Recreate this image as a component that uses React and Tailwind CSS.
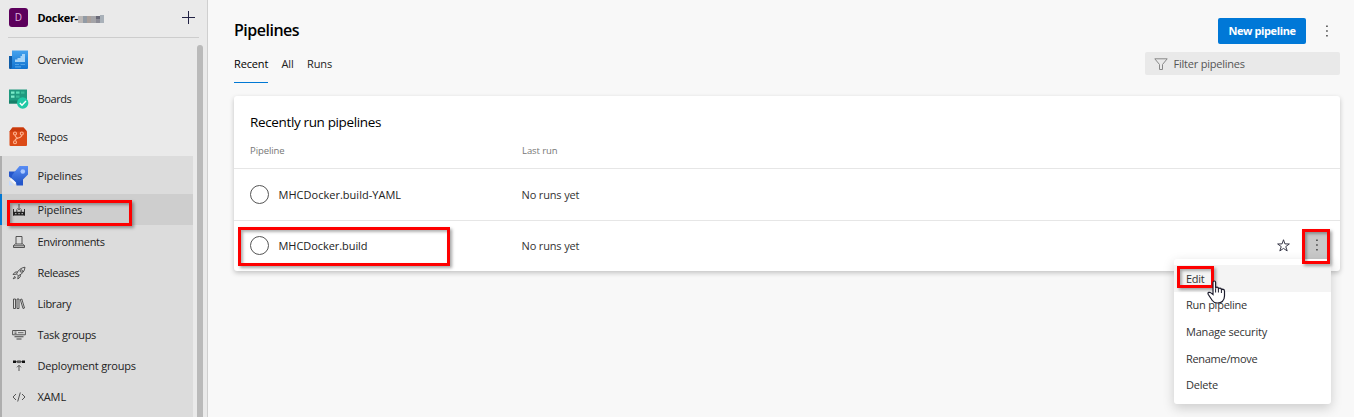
import React from "react";

const OverviewIcon = () => (
  <svg width="20" height="20" viewBox="0 0 20 20">
    <defs>
      <linearGradient id="ov" x1="0" y1="0" x2="0" y2="1">
        <stop offset="0" stopColor="#45a3ee" />
        <stop offset="1" stopColor="#0f72cf" />
      </linearGradient>
    </defs>
    <path d="M0 6h3v13H1a1 1 0 0 1-1-1z" fill="#0f5da8" />
    <path d="M3 .5h16v17.500a1 1 0 0 1-1 1H1.500q1.500-.4 1.500-2z" fill="url(#ov)" />
    <path d="M6 12V9.500h2.500V8h3V6H13V4h3v8z" fill="#a5d4f8" />
    <path d="M6 14.500h4M11.500 14.500h4.500M6 16.800h6" stroke="#4fa3e8" strokeWidth="1.200" />
  </svg>
);

const BoardsIcon = () => (
  <svg width="20" height="20" viewBox="0 0 20 20">
    <path d="M0 .5h18v14H0z" fill="#20997f" />
    <path d="M0 11.500h18v3H0z" fill="#177f69" />
    <path d="M2 2.500h3.500v2.200H2zM2 6.500h3.500v2.200H2z" fill="#7bebc9" />
    <path d="M7 2.500h3.500v2.200H7z" fill="#5ee0b9" />
    <path d="M7 6.500h3.500v2.200H7zM12 2.500h3.500v2.200H12z" fill="#39bb98" />
    <circle cx="13.700" cy="14" r="5.700" fill="#20c9a6" />
    <path d="M10.800 14l2.200 2.300 4-4.300" stroke="#fff" strokeWidth="1.400" fill="none" />
  </svg>
);

const ReposIcon = () => (
  <svg width="20" height="20" viewBox="0 0 20 20">
    <path d="M3.500.5h11L18 4.500v13.500a1 1 0 0 1-1 1H1.500a1 1 0 0 1-1-1V4.500z" fill="#dc4a16" />
    <path d="M3.500.5h11L18 4.500H.5z" fill="#c93a0c" />
    <g fill="none" stroke="#ffb492" strokeWidth="1.100">
      <circle cx="6" cy="6.500" r="1.500" />
      <circle cx="12.800" cy="6.500" r="1.500" />
      <circle cx="6" cy="15.200" r="1.500" />
      <path d="M12.800 8c0 4-6.800 2-6.800 5.700M6 8q0 2 2.500 3" />
    </g>
  </svg>
);

const RocketBlueIcon = () => (
  <svg width="20" height="20" viewBox="0 0 20 20">
    <defs>
      <linearGradient id="rk" x1="0" y1="0" x2="0" y2="1">
        <stop offset="0" stopColor="#5a8ef5" />
        <stop offset="1" stopColor="#1f53c4" />
      </linearGradient>
    </defs>
    <path d="M0 5.500h7l-3 8-4-3zM7 16.500l7-4v7H7.500z" fill="#2456cb" />
    <path d="M10.500 0H19v8.500L9 18.500 2.500 12q0-3 3-6z" fill="url(#rk)" />
    <circle cx="13.800" cy="5.500" r="2.300" fill="#a9c8ff" />
    <path d="M1.500 13l5 4.500" stroke="#f2f6ff" strokeWidth="1.800" />
    <path d="M0 14.500l4.500 5H0z" fill="#c6dafc" />
  </svg>
);

const S = ({ children }) => (
  <svg width="14" height="14" viewBox="0 0 14 14" fill="none" stroke="#444" strokeWidth=".9">
    {children}
  </svg>
);

const BuildIcon = () => (
  <S>
    <path d="M1.500 12.500V6M12.500 12.500V6M4.800 6.500V9M9.200 6.500V9" stroke="#222" />
    <path d="M1 8.800h12v3.700H1z" fill="#222" stroke="none" />
    <path d="M7 1v5.500M5.500 5.300L7 6.800l1.500-1.500" />
    <path d="M3 10.700h1.500M6.300 10.700h1.500M9.500 10.700H11" stroke="#ddd" />
  </S>
);
const EnvIcon = () => (
  <S>
    <path d="M4 9V1.500h6V9M3.500 9h7l2 1.500v2h-11v-2zM1.500 10.800h11" />
  </S>
);
const ReleaseIcon = () => (
  <S>
    <path d="M4.500 8q2.500-6 8.500-6.800Q12.500 7 6.300 9.800zM5.500 5.800l-2.500.4L1 8.500l3.300-.3M8.300 8.700l-.1 2.300L5.800 13l.4-3.200M3 10l-1.800 2.800L4 11.500" />
    <circle cx="9.300" cy="5" r="1.200" />
  </S>
);
const LibraryIcon = () => (
  <S>
    <path d="M1.500 2v9.500h2V2zM5 2v9.500h2V2zM8.300 2.500l1.500-.5 2.700 9-1.500.5z" />
  </S>
);
const TaskIcon = () => (
  <S>
    <path d="M.6 2.500h12.800v4.300H.6z" />
    <path d="M2.500 4h2M2.500 5.400h2M6 4.700h5.500" strokeWidth=".8" />
    <path d="M2.500 8.800h9M4.500 11h5" strokeWidth="1.100" />
  </S>
);
const DeployIcon = () => (
  <S>
    <path d="M1 1.500h3v2.500H1zM10 1.500h3v2.500h-3z" fill="#111" stroke="none" />
    <path d="M5.300 1.900h3.400v1.700H5.300zM4 2.700h6M7 12V6.500M5 8.300l2-2 2 2" />
  </S>
);
const XamlIcon = () => (
  <S>
    <path d="M4 4L1 7l3 3M10 4l3 3-3 3M8.300 2.500l-2.600 9" />
  </S>
);

const Dots = () => (
  <svg width="4" height="12" viewBox="0 0 4 12" fill="#333">
    <path d="M1.250 .5h1.400v1.400h-1.400zM1.250 5.300h1.400v1.400h-1.400zM1.250 10.100h1.400v1.400h-1.400z" />
  </svg>
);

const hubs = [
  { label: "Overview", icon: <OverviewIcon />, t: "tracking-[-0.25px]" },
  { label: "Boards", icon: <BoardsIcon />, t: "tracking-[-0.4px]" },
  { label: "Repos", icon: <ReposIcon />, t: "tracking-[-0.25px]" },
];

const subs = [
  { label: "Environments", icon: <EnvIcon />, t: "tracking-[-0.35px]" },
  { label: "Releases", icon: <ReleaseIcon />, t: "tracking-[-0.35px]" },
  { label: "Library", icon: <LibraryIcon />, t: "tracking-[-0.3px]" },
  { label: "Task groups", icon: <TaskIcon />, t: "tracking-[-0.3px]" },
  { label: "Deployment groups", icon: <DeployIcon />, t: "tracking-[-0.18px]" },
  { label: "XAML", icon: <XamlIcon />, t: "tracking-[-0.1px]" },
];

const Mark = ({ className }) => (
  <div className={"pointer-events-none absolute z-20 border-3 border-[#fe0000] shadow-[2px_2px_3px_rgba(0,0,0,0.35),inset_2px_2px_3px_rgba(0,0,0,0.3)] " + className} />
);

const Hub = ({ item }) => (
  <div className="flex h-[38.500px] items-center pl-[9px]">
    {item.icon}
    <span className={"ml-[8.500px] " + item.t}>{item.label}</span>
  </div>
);

const Row = ({ name, nameClass, children, className }) => (
  <div className={"flex items-center border-t border-[#e6e6e6] pl-4 " + className}>
    <div className="h-[19px] w-[19px] rounded-full border-[1.500px] border-[#555]" />
    <div className={"ml-[9.500px] w-[243px] pt-px font-medium " + nameClass}>{name}</div>
    <div className="grow pt-px tracking-[-0.15px] text-[#333]">No runs yet</div>
    {children}
  </div>
);

export default function App() {
  return (
    <div className="relative flex h-[417px] w-[1354px] overflow-hidden bg-[#f8f8f8] font-['Open_Sans','Noto_Sans',sans-serif] text-[11px] whitespace-nowrap text-[#222]">
      <aside className="flex w-[208px] shrink-0 flex-col border-r border-[#cfcfcf] bg-[#eaeaea]">
        <div className="ml-2 flex h-[38px] w-[191px] shrink-0 items-center border-b border-[#cdcdcd] pl-px">
          <div className="mb-0.5 flex h-[19px] w-[19px] items-center justify-center rounded-[3px] bg-[#5c005c] text-[10px] text-[#e0b8e0]">D</div>
          <span className="ml-[9.500px] font-bold tracking-[-0.3px] text-black">Docker-</span>
          <svg className="mt-0.5" width="27" height="9" viewBox="0 0 27 9" shapeRendering="crispEdges">
            <path d="M0 1h5v7H0z" fill="#bcb8b6" />
            <path d="M5 1h4v7H5z" fill="#929ba5" />
            <path d="M9 1h4v7H9z" fill="#aaa09b" />
            <path d="M13 1h5v7h-5z" fill="#a4a4a8" />
            <path d="M18 1h4v3h-4z" fill="#696977" />
            <path d="M18 4h4v4h-4z" fill="#8d8d97" />
            <path d="M22 0h4v8h-4z" fill="#a9b1b9" />
          </svg>
          <svg className="mb-0.5 ml-auto mr-1" width="13" height="13" viewBox="0 0 13 13" stroke="#222244">
            <path d="M6.500 0v13M0 6.500h13" />
          </svg>
        </div>
        <div className="flex grow">
          <nav className="w-[193px] pt-[3px]">
            {hubs.map((h) => (
              <Hub key={h.label} item={h} />
            ))}
            <div className="-mt-[0.500px] h-[262px] border-l-2 border-[#aeaeae] bg-[#dcdcdc]">
              <div className="-ml-0.5 h-[38px] pt-[0.600px]">
                <Hub item={{ label: "Pipelines", icon: <RocketBlueIcon />, t: "tracking-[-0.15px]" }} />
              </div>
              <div className="-ml-0.5 flex h-[31px] items-center border-l-2 border-[#0078d4] bg-[#cecece] pt-px pl-[10px]">
                <BuildIcon />
                <span className="ml-[11.500px] tracking-[-0.15px]">Pipelines</span>
              </div>
              <div className="pt-[1.500px]">
                {subs.map((s) => (
                  <div key={s.label} className="flex h-[31px] items-center pl-[10px]">
                    {s.icon}
                    <span className={"ml-[11.500px] pt-px " + s.t}>{s.label}</span>
                  </div>
                ))}
              </div>
            </div>
          </nav>
          <div className="mt-[7px] ml-1 w-[6px] rounded-t-[3px] bg-[#bababa]" />
        </div>
      </aside>

      <main className="flex grow flex-col pr-[14px] pl-[26px]">
        <header className="flex h-[46px] items-end">
          <h1 className="mb-[5px] grow text-[16px] font-semibold leading-[22px] tracking-[-0.5px] text-black">Pipelines</h1>
          <button className="mb-[2px] h-[26px] w-[88px] rounded-[2px] bg-[#0078d7] text-[11px] font-bold tracking-[-0.4px] text-white">New pipeline</button>
          <div className="mb-[9px] ml-[19px] mr-[11px]"><Dots /></div>
        </header>
        <div className="flex h-[37px] items-end justify-between">
          <div className="flex h-[37px] gap-[13.500px] tracking-[-0.15px]">
            <div className="flex w-[34px] items-center border-b border-[#0078d4] font-medium text-black">Recent</div>
            <div className="flex items-center">All</div>
            <div className="flex items-center">Runs</div>
          </div>
          <div className="mb-[8px] flex h-[23px] w-[195px] items-center rounded-[2px] bg-[#e9e9e9] pl-[9px] text-[#555]">
            <svg width="14" height="12" viewBox="0 0 14 12" fill="none" stroke="#888">
              <path d="M.8.800h12.400L8.500 6.500v5h-3v-5z" />
            </svg>
            <span className="ml-[5.500px] pt-px tracking-[-0.22px]">Filter pipelines</span>
          </div>
        </div>
        <section className="mt-[13px] h-[175px] rounded-[3px] bg-white shadow-[0_2px_5px_rgba(0,0,0,0.22)]">
          <div className="h-[72px] pl-4">
            <h2 className="pt-[16px] text-[13.500px] leading-[20px] tracking-[-0.36px] text-black">Recently run pipelines</h2>
            <div className="mt-[12px] flex text-[9.500px] leading-[14px] tracking-[-0.08px] text-[#777]">
              <span className="w-[272px]">Pipeline</span>
              <span>Last run</span>
            </div>
          </div>
          <Row name="MHCDocker.build-YAML" nameClass="tracking-[0.02px]" className="h-[52px]" />
          <Row name="MHCDocker.build" nameClass="tracking-[-0.06px]" className="h-[50px]">
            <svg className="mr-[14px] mb-px" width="13" height="13" viewBox="0 0 12 12" fill="none" stroke="#334" strokeWidth=".9">
              <path d="M6 .7l1.300 3.800 4.100.1-3.300 2.400 1.300 4L6 8.700 2.600 11l1.300-4L.6 4.600l4.100-.1z" />
            </svg>
            <div className="mr-[10px] flex h-[31px] w-[26px] items-center justify-center bg-[#c8c8c8] pb-[2px]"><Dots /></div>
          </Row>
        </section>
      </main>

      <div className="absolute top-[259px] left-[1174px] z-10 h-[145px] w-[157px] rounded-[3px] bg-white pt-[6px] leading-[26.600px] tracking-[-0.14px] text-[#333] shadow-[0_4px_12px_rgba(0,0,0,0.18)]">
        <div className="h-[27px] bg-[#f4f4f4] pt-px pl-3 tracking-[-0.3px]">Edit</div>
        <div className="pl-3 tracking-[-0.25px]">Run pipeline</div>
        <div className="pl-3 tracking-[-0.2px]">Manage security</div>
        <div className="h-[26.600px] pt-[0.600px] pl-3 tracking-[-0.3px]">Rename/move</div>
        <div className="pl-3 tracking-[-0.2px]">Delete</div>
      </div>

      <Mark className="top-[200px] left-[7px] h-[26px] w-[125px]" />
      <Mark className="top-[227px] left-[238px] h-[39px] w-[212px]" />
      <Mark className="top-[229px] left-[1302px] h-[35px] w-[28px]" />
      <Mark className="top-[266px] left-[1177px] h-[22px] w-[37px]" />
      <svg className="absolute top-[280px] left-[1207px] z-30" width="19" height="24" viewBox="0 0 19 24">
        <path d="M6 14.500V2.500Q6 1 7.300 1t1.300 1.500V8.500q0-1.300 1.400-1.300T11.400 8.500v.7q.2-1.200 1.600-1.100 1.400.1 1.400 1.600v.4q.3-.9 1.400-.9 1.700.2 1.700 2V16q0 3.500-2.200 5.500-1.500 1.500-5 1.500-3.300 0-5-2.500L1.300 14.500q-.8-1.500.4-2.100 1.300-.4 2.300.5z" fill="#fff" stroke="#1c1c2c" strokeWidth="1.200" />
        <path d="M8.600 8.500v4M11.400 9v3.500M14.400 10V13" stroke="#1c1c2c" />
      </svg>
    </div>
  );
}
